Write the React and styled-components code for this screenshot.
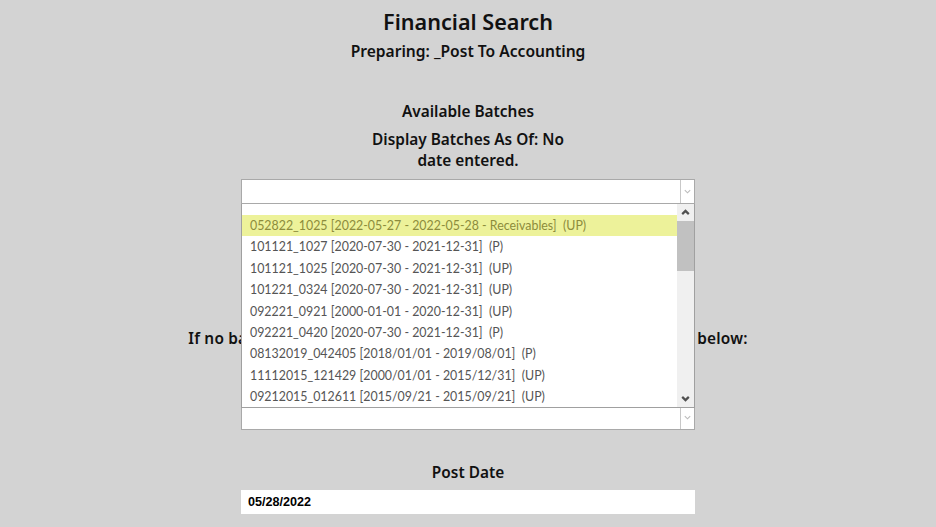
import styled, { createGlobalStyle } from "styled-components";

const GlobalStyle = createGlobalStyle`
  body {
    margin: 0;
    background: #d3d3d3;
    font-family: "Noto Sans", Lato, sans-serif;
  }
`;

const batches = [
  { label: "052822_1025 [2022-05-27 - 2022-05-28 - Receivables]  (UP)", active: true },
  { label: "101121_1027 [2020-07-30 - 2021-12-31]  (P)" },
  { label: "101121_1025 [2020-07-30 - 2021-12-31]  (UP)" },
  { label: "101221_0324 [2020-07-30 - 2021-12-31]  (UP)" },
  { label: "092221_0921 [2000-01-01 - 2020-12-31]  (UP)" },
  { label: "092221_0420 [2020-07-30 - 2021-12-31]  (P)" },
  { label: "08132019_042405 [2018/01/01 - 2019/08/01]  (P)" },
  { label: "11112015_121429 [2000/01/01 - 2015/12/31]  (UP)" },
  { label: "09212015_012611 [2015/09/21 - 2015/09/21]  (UP)" },
];

const Chevron = ({ up, size = 9, color = "#bbb", width = 1.2 }) => (
  <svg width={size} height={size} viewBox="0 0 10 10">
    <path
      d={up ? "M2 6.5 L5 3.5 L8 6.5" : "M2 3.5 L5 6.5 L8 3.5"}
      fill="none"
      stroke={color}
      strokeWidth={width}
    />
  </svg>
);

export default function App() {
  return (
    <>
      <GlobalStyle />
      <Page>
        <Title>Financial Search</Title>
        <Subtitle>Preparing: _Post To Accounting</Subtitle>
        <Heading $top={41}>Available Batches</Heading>
        <AsOf>Display Batches As Of: No date entered.</AsOf>

        <SelectWrap $top={8}>
          <Select $height={25}>
            <SelectValue />
            <ChevronCell>
              <Chevron />
            </ChevronCell>
          </Select>
          <Listbox>
            <Options>
              {batches.map((b) => (
                <Option key={b.label} $active={b.active}>
                  {b.label}
                </Option>
              ))}
            </Options>
            <Scrollbar>
              <ScrollButton>
                <Chevron up size={11} color="#505050" width={2} />
              </ScrollButton>
              <Track>
                <Thumb />
              </Track>
              <ScrollButton>
                <Chevron size={11} color="#505050" width={2} />
              </ScrollButton>
            </Scrollbar>
          </Listbox>
        </SelectWrap>

        <Heading $top={125} $spacing={0.2}>
          If no batches are listed above, please enter the batch information below:
        </Heading>

        <SelectWrap $top={56}>
          <Select $height={25}>
            <SelectValue />
            <ChevronCell>
              <Chevron />
            </ChevronCell>
          </Select>
        </SelectWrap>

        <Heading $top={33}>Post Date</Heading>
        <DateInput defaultValue="05/28/2022" />
      </Page>
    </>
  );
}

const Page = styled.div`
  display: flex;
  flex-direction: column;
  align-items: center;
  padding-top: 9px;
  color: #111;
  text-align: center;
`;

const Title = styled.h1`
  margin: 0;
  font-size: 21.6px;
  line-height: 26px;
  font-weight: 600;
`;

const Subtitle = styled.div`
  margin-top: 6px;
  font-size: 15.6px;
  line-height: 20px;
  font-weight: 600;
`;

const Heading = styled.div`
  margin-top: ${(p) => p.$top}px;
  font-size: 15.4px;
  line-height: 20px;
  font-weight: 600;
  letter-spacing: ${(p) => p.$spacing || 0}px;
`;

const AsOf = styled.div`
  margin-top: 7px;
  width: 210px;
  font-size: 15.4px;
  line-height: 21px;
  font-weight: 600;
`;

const SelectWrap = styled.div`
  position: relative;
  margin-top: ${(p) => p.$top}px;
  width: 454px;
`;

const Select = styled.div`
  display: flex;
  height: ${(p) => p.$height}px;
  box-sizing: border-box;
  background: #fff;
  border: 1px solid #a9a9a9;
`;

const SelectValue = styled.div`
  flex: 1;
`;

const ChevronCell = styled.div`
  width: 13px;
  display: flex;
  align-items: center;
  justify-content: center;
  border-left: 1px solid #c8c8c8;
`;

const Listbox = styled.div`
  position: absolute;
  top: 100%;
  left: 0;
  right: 0;
  height: 204px;
  box-sizing: border-box;
  display: flex;
  background: #fff;
  border: 1px solid #a0a0a0;
  border-top: none;
  z-index: 2;
`;

const Options = styled.div`
  flex: 1;
  padding-top: 11px;
  overflow: hidden;
  text-align: left;
`;

const Option = styled.div`
  height: 21.4px;
  line-height: 21.4px;
  padding-left: 8px;
  font-family: Lato, sans-serif;
  font-size: 12.4px;
  white-space: pre;
  color: ${(p) => (p.$active ? "#8c8c3c" : "#555")};
  background: ${(p) => (p.$active ? "#edf29a" : "transparent")};
`;

const Scrollbar = styled.div`
  width: 17px;
  display: flex;
  flex-direction: column;
  background: #f0f0f0;
`;

const ScrollButton = styled.div`
  height: 17px;
  display: flex;
  align-items: center;
  justify-content: center;
`;

const Track = styled.div`
  flex: 1;
`;

const Thumb = styled.div`
  height: 50px;
  background: #c1c1c1;
`;

const DateInput = styled.input`
  margin-top: 7px;
  width: 454px;
  height: 24px;
  box-sizing: border-box;
  border: none;
  padding: 0 7px;
  font-family: "Liberation Sans", Arial, sans-serif;
  font-weight: 700;
  font-size: 12.6px;
  color: #000;
  background: #fff;
  outline: none;
`;
